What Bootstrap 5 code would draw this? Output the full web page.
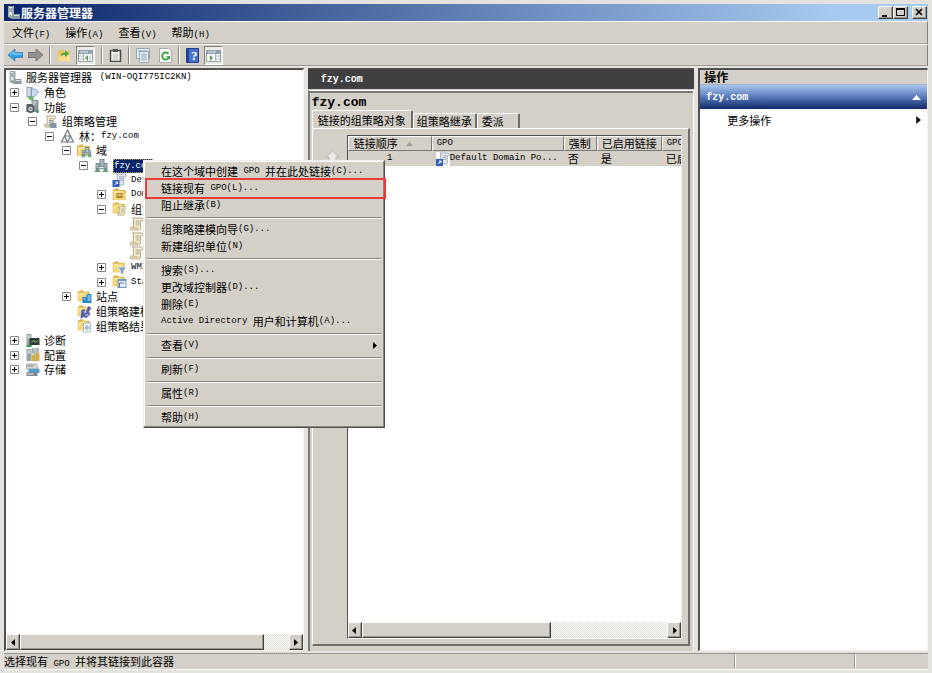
<!DOCTYPE html>
<html lang="zh-CN">
<head>
<meta charset="utf-8">
<meta name="viewport" content="width=device-width, initial-scale=1">
<title>服务器管理器</title>
<link href="https://cdn.jsdelivr.net/npm/bootstrap@5.3.0/dist/css/bootstrap.min.css" rel="stylesheet">
<style>
:root{--face:#d4d0c8;--shade:#808080;--deep:#505050;--navy:#0a246a}
body{font:11px/15px "Noto Sans CJK SC",sans-serif;color:#000;background:#e3e2de;min-height:100vh}
button{font:inherit;color:inherit;background:none;border:0;padding:0}
svg{display:block;flex:none}
ul{list-style:none;margin:0;padding:0}
.en{font-family:"Liberation Mono",monospace;font-size:9px;line-height:1}
.en-md{font-family:"Liberation Mono",monospace;font-size:10px}
.en-lg{font-family:"Liberation Mono",monospace;font-size:13px}
.window{min-height:100vh;padding:4px 4px 3px;background:#e3e2de}
.titlebar{height:17px;background:linear-gradient(90deg,var(--navy),#a6caf0 90%);color:#fff;font-size:12px;padding:0 1px 0 3px}
.raised{background:var(--face);border:1px solid;border-color:#fff #404040 #404040 #fff;box-shadow:inset -1px -1px 0 #9a968e}
.winbtn{width:15px;height:13px}
.menubar{height:23px;background:var(--face);border-top:1px solid #f8f7f4;border-right:1px solid var(--shade);border-bottom:1px solid #aaa69e;gap:15px;padding:0 8px}
.toolbar{height:22px;background:var(--face);border-top:1px solid #fff;border-right:1px solid var(--shade);border-bottom:1px solid #a09c94;padding:0 4px;gap:5px}
.tool-on{border:1px solid;border-color:var(--shade) #fff #fff var(--shade);background:#eceae5;height:19px;padding:1px}
.divide{width:2px;height:17px;margin:0 1px;border-left:1px solid #8c8880;border-right:1px solid #fff}
.panes{display:grid;grid-template-columns:minmax(0,300fr) minmax(0,387fr) minmax(0,230fr);gap:4px;padding-top:2px}
.sunken{border:1px solid;border-width:2px 1px 1px 2px;border-color:var(--deep) #f4f3f0 #f4f3f0 var(--deep);background:#fff}
.tree li{display:flex;align-items:center;height:15px;white-space:nowrap;padding-left:4px}
.tree li:nth-child(5n+3),.tree li:nth-child(5n+5){height:14px}
.tree .lv2{padding-left:22px}.tree .lv3{padding-left:39px}.tree .lv4{padding-left:56px}
.tree .lv5{padding-left:73px}.tree .lv6{padding-left:91px}.tree .lv7{padding-left:108px}
.twig{width:9px;height:9px;margin-right:6px;flex:none}
.tree li>svg.ico{margin-right:4px}
.tree .root{padding-left:2px}
.tree .root>svg.ico{margin-right:3px}
.picked{background:var(--navy);color:#fff;outline:1px dotted #b99a50;outline-offset:-1px;height:14px;line-height:14px;padding:0 1px}
.scroller{height:16px;background:repeating-conic-gradient(#fff 0 25%,#dfdcd6 0 50%) 0 0/2px 2px}
.arrowbtn{width:14px}
.thumb-a{flex:0 0 91%}.thumb-b{flex:0 0 62%}
.track{min-width:0}
.center-pane{background:var(--face);border-top:1px solid #505050}
.darkhead{height:20px;background:#404040;color:#fff;padding:0 13px;line-height:22px}
.inner{border:1px solid #fff;border-left:2px solid #777;border-bottom:0;box-shadow:inset 0 2px 0 #777;padding:4px 3px 5px 2px;margin-top:1px}
.domain{height:15px;line-height:16px}
.tabs{height:18px}
.tab{height:15px;line-height:14px;padding:0 3px;border-right:2px solid #706c66;border-top:1px solid #fff;border-left:1px solid #fff;border-radius:2px 2px 0 0;white-space:nowrap}
.tab.active{height:18px;padding:0 5px;line-height:16px}
.tab.wide-end{padding:0 14px 0 4px}
.sheet{border:1px solid #fff;border-right:2px solid #706c66;border-bottom:2px solid #706c66;padding:6px 6px 5px 13px;gap:8px}
.listbox{min-width:0;border:1px solid #505050;border-right-color:#eee;border-bottom-color:#fff;background:#fff}
.gpo{table-layout:fixed;width:380px;border-collapse:separate;border-spacing:0}
.gpo th{font-weight:400;height:15px;line-height:13px;padding:0 5px;background:var(--face);border:1px solid;border-color:#fff #777 #777 #fff;white-space:nowrap}
.gpo td{height:15px;line-height:15px;padding:0 4px;background:var(--face);white-space:nowrap}
.gpo th.tight,.gpo td.tight{padding:0 4px}
.gpo .en{vertical-align:top;line-height:inherit}
.actions-title{height:15px;line-height:14px;background:var(--face);padding-left:4px;font-size:12px;border-bottom:1px solid #9db4d0}
.actions-head{height:24px;background:linear-gradient(#a9c6ef,#5779b8 50%,#12296c);color:#fff;padding:1px 6px 0 6px}
.more{padding:0 6px 0 27px;height:22px}
.status{height:17px;line-height:15px;margin-top:2px;background:var(--face);border-top:1px solid #9a968e;border-bottom:1px solid #fff}
.status .cell{border-left:1px solid #9a968e;box-shadow:inset 1px 0 0 #fff}
.status .c1{flex:0 0 13%}.status .c2{flex:0 0 8%}
.popup{position:absolute;left:143px;top:160px;width:242px;z-index:5;background:var(--face);border:1px solid;border-color:#eee #505050 #505050 #eee;box-shadow:inset -1px -1px 0 #8a867e,inset 1px 1px 0 #fff;padding:2px 3px 1px}
.popup button{display:flex;align-items:center;width:100%;height:17px;padding:0 4px 0 14px;white-space:nowrap}
.popup hr{margin:3px 0 2px;height:2px;border:0;opacity:1;border-top:1px solid #8a867e;border-bottom:1px solid #fff}
.popup button.chosen{outline:2px solid #ea3c37;width:calc(100% + 3px)}
</style>
<script src="https://cdn.jsdelivr.net/npm/bootstrap@5.3.0/dist/js/bootstrap.bundle.min.js"></script>
</head>
<body>
<svg width="0" height="0" class="position-absolute" aria-hidden="true">
<defs>
<symbol id="plus" viewBox="0 0 9 9"><path d="M.5.5h8v8h-8z" fill="#fff" stroke="#888"/><path d="M2 4.500h5M4.500 2v5" stroke="#000"/></symbol>
<symbol id="minus" viewBox="0 0 9 9"><path d="M.5.5h8v8h-8z" fill="#fff" stroke="#888"/><path d="M2 4.500h5" stroke="#000"/></symbol>
<symbol id="server" viewBox="0 0 14 14"><path d="M1 0h6v12l-2 1-4-2z" fill="#9aa8ae"/><path d="M2 1h3v9H2z" fill="#dfe6e8"/><path d="M2 3h3M2 5h3" stroke="#63767e"/><path d="M6 8h7v5H6z" fill="#8799a2"/><path d="M7 9h5v1H7z" fill="#d7e0e4"/><path d="M3 9h1v1H3z" fill="#3aa340"/></symbol>
<symbol id="roles" viewBox="0 0 14 14"><path d="M1 1h6v11l-2 1-4-2z" fill="#92a5ad"/><path d="M2 2h3v8H2z" fill="#d5e0e5"/><path d="M6 3l4 0 3 3-3 4-4 1z" fill="#c7dcee" stroke="#6b8daf" stroke-width=".7"/><path d="M3 11h5v3H4z" fill="#58ba50"/></symbol>
<symbol id="features" viewBox="0 0 14 14"><path d="M6 0h7v12H6z" fill="#8a989d"/><path d="M7 2h4M7 4h4" stroke="#e0e7e9"/><path d="M1 4h6v8H1z" fill="#59636a"/><circle cx="5" cy="9" r="4" fill="#555c62"/><circle cx="5" cy="9" r="2.300" fill="#d7dcdc"/><circle cx="5" cy="9" r="1" fill="#596168"/><path d="M11 10h2v3h-2z" fill="#2e9a46"/></symbol>
<symbol id="scroll" viewBox="0 0 14 14"><path d="M3 1h9c2 0 2 3 0 3h-1v7c0 2-1 2-2 2H2c-2 0-2-3 0-3h2V3C4 2 4 1 3 1z" fill="#f5eed2" stroke="#a39674" stroke-width=".8"/><path d="M6 4h4M6 6h4M6 8h4" stroke="#9b957c" stroke-width=".8"/><path d="M2 11h7" stroke="#b6a66e"/></symbol>
<symbol id="bluescroll" viewBox="0 0 14 14"><path d="M3 1h9c2 0 2 3 0 3h-1v7c0 2-1 2-2 2H2c-2 0-2-3 0-3h2V3C4 2 4 1 3 1z" fill="#e6e8ee" stroke="#8890a5" stroke-width=".8"/><path d="M6 4h4M6 6h4M6 8h4" stroke="#8791ac" stroke-width=".8"/></symbol>
<symbol id="policy" viewBox="0 0 14 14"><use href="#scroll" width="13" height="13"/><path d="M6 5h3v7H6zM9 8h4v5H7z" fill="#8197a6"/><path d="M7 6h1v2H7z" fill="#fff"/></symbol>
<symbol id="forest" viewBox="0 0 14 14"><path d="M7 1l6 12H1zM4 7h6l-3 6z" fill="#f3f4f4" stroke="#777f83" stroke-width="1.200"/></symbol>
<symbol id="folder" viewBox="0 0 14 14"><path d="M0 2l5-2 2 2h6v10H0z" fill="#ddb54c"/><path d="M1 3h10v8H1z" fill="#fae79c"/><path d="M3 5h10l-1 7H1z" fill="#f3d676"/></symbol>
<symbol id="towers" viewBox="0 0 14 14"><path d="M5 0h5v8H5zM1 4h4v8H1zM9 4h4v8H9z" fill="#738c94"/><path d="M6 2h3M6 4h3M2 6h2M2 8h2M10 6h2M10 8h2M6 6h3" stroke="#d7e7e8"/><path d="M0 12h6v1H0zM8 12h6v1H8zM5 9h4v1H5z" fill="#58a972"/></symbol>
<symbol id="domains" viewBox="0 0 15 14"><use href="#folder" width="14" height="14"/><use href="#towers" x="4" y="3" width="11" height="11"/></symbol>
<symbol id="linkgpo" viewBox="0 0 14 14"><use href="#bluescroll" x="1" width="13" height="13"/><path d="M0 7h7v7H0z" fill="#3460bd"/><path d="M2 12l3-3M3 9h2v2" stroke="#fff" fill="none"/></symbol>
<symbol id="ou" viewBox="0 0 14 14"><use href="#folder" width="14" height="14"/><path d="M4 5h6v5H4z" fill="#ab872b"/><path d="M5 7h4" stroke="#fff5c0"/></symbol>
<symbol id="gpos" viewBox="0 0 14 14"><use href="#folder" width="13" height="13"/><use href="#scroll" x="4" y="4" width="10" height="10"/></symbol>
<symbol id="filter" viewBox="0 0 14 14"><use href="#folder" width="13" height="13"/><path d="M5 6h9l-3 4v3H8v-3z" fill="#7fa6cf" stroke="#fff" stroke-width=".6"/></symbol>
<symbol id="starter" viewBox="0 0 14 14"><use href="#folder" width="13" height="13"/><path d="M5 4h9v9H5z" fill="#6e95bf"/><path d="M6 6h7v6H6z" fill="#e4edf5"/><path d="M7 12V8h4" fill="none" stroke="#5178a7"/></symbol>
<symbol id="sites" viewBox="0 0 14 14"><use href="#folder" width="13" height="13"/><path d="M5 7h4v6H5zM9 4h5v9H9z" fill="#2787cd"/><path d="M6 9h2M10 6h3M10 8h3M10 10h3" stroke="#c0e3ff"/></symbol>
<symbol id="model" viewBox="0 0 14 14"><use href="#folder" width="13" height="13"/><path d="M4 5l3-1 1 3 3-6 3 2-3 4 2 2-4 4-3-1-3 2z" fill="#5560ad"/><path d="M6 7h3M8 10h3" stroke="#e7e9ff"/></symbol>
<symbol id="result" viewBox="0 0 14 14"><use href="#folder" width="13" height="13"/><path d="M6 4h7v9H6z" fill="#edf4fa" stroke="#91a5b5" stroke-width=".7"/><path d="M11 7c-4 0-4 3-1 4M9 9h3" stroke="#4b88ad" fill="none"/></symbol>
<symbol id="diag" viewBox="0 0 14 14"><path d="M1 0h5v12H1z" fill="#94a3a7"/><path d="M2 2h3M2 4h3" stroke="#eef2f2"/><path d="M4 4h10v7H4z" fill="#2d3936"/><path d="M5 8h2l1-2 2 3 1-2h2" stroke="#71c456" fill="none" stroke-width=".8"/><path d="M1 11h5v2H1z" fill="#3b9b55"/></symbol>
<symbol id="config" viewBox="0 0 14 14"><path d="M1 1h5v12H1z" fill="#94a3a7"/><path d="M2 3h3M2 5h3" stroke="#eef2f2"/><path d="M7 0v5l2 2v6h2V6l2-2V0" fill="#b6c0c4" stroke="#7b8588" stroke-width=".6"/><path d="M6 7h3v6H6zM11 5h3v8h-3z" fill="#e3ad26"/></symbol>
<symbol id="storage" viewBox="0 0 14 14"><path d="M1 1h10l2 5H1z" fill="#d6d9d9" stroke="#818c91" stroke-width=".6"/><path d="M2 3h6" stroke="#777"/><path d="M3 6h11v4H3z" fill="#4a9ed2"/><path d="M1 9h11v4H1z" fill="#7b8a91"/><path d="M2 11h6" stroke="#eef"/></symbol>
<symbol id="left" viewBox="0 0 5 7"><path d="M4 0v7L0 3.500z"/></symbol>
<symbol id="right" viewBox="0 0 5 7"><path d="M1 0v7l4-3.500z"/></symbol>
</defs>
</svg>
<div class="window d-flex flex-column">
<header class="titlebar d-flex align-items-center fw-bold">
<svg width="14" height="14"><use href="#server"/></svg><span>服务器管理器</span>
<span class="ms-auto d-flex">
<button class="raised winbtn" aria-label="最小化"><svg width="12" height="11"><path d="M3 8h5v2H3z"/></svg></button>
<button class="raised winbtn" aria-label="最大化"><svg width="12" height="11"><path d="M2.500 2.500h8v6h-8z" fill="none" stroke="#000"/><path d="M2 1h9v2H2z"/></svg></button>
<button class="raised winbtn ms-1" aria-label="关闭"><svg width="12" height="11"><path d="M3 2l6 6M9 2L3 8" stroke="#000" stroke-width="1.600"/></svg></button>
</span>
</header>
<nav class="menubar d-flex align-items-center">
<button>文件<span class="en">(F)</span></button><button>操作<span class="en">(A)</span></button><button>查看<span class="en">(V)</span></button><button>帮助<span class="en">(H)</span></button>
</nav>
<div class="toolbar d-flex align-items-center" role="toolbar" aria-label="工具栏">
<button aria-label="后退"><svg width="15" height="14"><path d="M0 7l7-6v3.500h8v5H7V13z" fill="#35a0e4" stroke="#327cb8" stroke-width=".8"/><path d="M2 7l4-3v2h8" stroke="#9cddff" fill="none"/></svg></button>
<button aria-label="前进"><svg width="15" height="14"><path d="M15 7L8 1v3.500H0v5h8V13z" fill="#929292" stroke="#686868" stroke-width=".8"/></svg></button>
<span class="divide"></span>
<button aria-label="向上一级"><svg width="14" height="14"><path d="M1 3l5-2 1 2h6v10H1z" fill="#eac45e"/><path d="M2 7h11v6H1z" fill="#f9dc83"/><path d="M3 9c1-4 3-4 5-4V2l4 4-4 3V7c-2 0-3 0-5 2z" fill="#45a844"/></svg></button>
<button class="tool-on" aria-label="显示控制台树"><svg width="15" height="15"><path d="M.5 2.500h14v11H.5z" fill="#fff" stroke="#99a1a5"/><path d="M1 3h13v3H1z" fill="#8ba0b4"/><path d="M2 4h8" stroke="#eaf1f4"/><path d="M5.500 6v8M1 8h4M1 11h4M12 7v6" stroke="#a8b5bc"/><path d="M10 7v6L7 10z" fill="#48a83d"/></svg></button>
<span class="divide"></span>
<button aria-label="属性"><svg width="13" height="14"><path d="M1.500 2.500h10v11h-10z" fill="#eee" stroke="#4c4c4c" stroke-width="1.500"/><path d="M4 1h5v3H4z" fill="#555"/><path d="M4 7h5M4 9h5M4 11h5" stroke="#bbb"/></svg></button>
<span class="divide"></span>
<button aria-label="列表"><svg width="14" height="15"><path d="M.5.500h13v10H.5z" fill="#edf4f7" stroke="#8ea4ae"/><path d="M3.500 3.500h9v11h-9z" fill="#fff" stroke="#8ea4ae"/><path d="M2 3h10M5 6h6M5 8h6M5 10h6M5 12h6" stroke="#719ab2"/></svg></button>
<button class="ms-1" aria-label="刷新"><svg width="13" height="15"><path d="M.5.500h9l3 3v11H.5z" fill="#fff" stroke="#aaa"/><path d="M9.500 6A3.500 3.500 0 1 0 10 9" fill="none" stroke="#3da84a" stroke-width="2"/><path d="M7 8h4v4z" fill="#3da84a"/></svg></button>
<span class="divide"></span>
<button aria-label="帮助"><svg width="13" height="15" font-family="Liberation Serif,serif"><path d="M.5.500h12v14H.5z" fill="#4470ce" stroke="#213d8d"/><path d="M1 1h2v13H1z" fill="#243f96"/><text x="5" y="12" font-size="13" font-weight="700" fill="#fff">?</text></svg></button>
<button class="tool-on" aria-label="显示操作窗格"><svg width="15" height="15"><path d="M.5 2.500h14v11H.5z" fill="#fff" stroke="#99a1a5"/><path d="M1 3h13v3H1z" fill="#8ba0b4"/><path d="M2 4h8" stroke="#eaf1f4"/><path d="M9.500 6v8M10 8h4M10 11h4" stroke="#a8b5bc"/><path d="M4 7v6l3-3z" fill="#48a83d"/></svg></button>
</div>
<main class="panes flex-grow-1">
<section class="sunken d-flex flex-column overflow-hidden">
<ul class="tree flex-grow-1" aria-label="控制台树">
<li class="root"><svg class="ico" width="15" height="14"><use href="#server"/></svg>服务器管理器&nbsp;<span class="en">&nbsp;(WIN-OQI775IC2KN)</span></li>
<li><svg class="twig"><use href="#plus"/></svg><svg class="ico" width="15" height="14"><use href="#roles"/></svg>角色</li>
<li><svg class="twig"><use href="#minus"/></svg><svg class="ico" width="15" height="14"><use href="#features"/></svg>功能</li>
<li class="lv2"><svg class="twig"><use href="#minus"/></svg><svg class="ico" width="15" height="14"><use href="#policy"/></svg>组策略管理</li>
<li class="lv3"><svg class="twig"><use href="#minus"/></svg><svg class="ico" width="15" height="14"><use href="#forest"/></svg>林：<span class="en">fzy.com</span></li>
<li class="lv4"><svg class="twig"><use href="#minus"/></svg><svg class="ico" width="15" height="14"><use href="#domains"/></svg>域</li>
<li class="lv5"><svg class="twig"><use href="#minus"/></svg><svg class="ico" width="15" height="14"><use href="#towers"/></svg><span class="picked en">fzy.com</span></li>
<li class="lv6"><span class="twig"></span><svg class="ico" width="15" height="14"><use href="#linkgpo"/></svg><span class="en">Default Domain Policy</span></li>
<li class="lv6"><svg class="twig"><use href="#plus"/></svg><svg class="ico" width="15" height="14"><use href="#ou"/></svg><span class="en">Domain Controllers</span></li>
<li class="lv6"><svg class="twig"><use href="#minus"/></svg><svg class="ico" width="15" height="14"><use href="#gpos"/></svg>组策略对象</li>
<li class="lv7"><span class="twig"></span><svg class="ico" width="15" height="14"><use href="#scroll"/></svg></li>
<li class="lv7"><span class="twig"></span><svg class="ico" width="15" height="14"><use href="#scroll"/></svg></li>
<li class="lv7"><span class="twig"></span><svg class="ico" width="15" height="14"><use href="#scroll"/></svg></li>
<li class="lv6"><svg class="twig"><use href="#plus"/></svg><svg class="ico" width="15" height="14"><use href="#filter"/></svg><span class="en">WMI</span></li>
<li class="lv6"><svg class="twig"><use href="#plus"/></svg><svg class="ico" width="15" height="14"><use href="#starter"/></svg><span class="en">Starter GPO</span></li>
<li class="lv4"><svg class="twig"><use href="#plus"/></svg><svg class="ico" width="15" height="14"><use href="#sites"/></svg>站点</li>
<li class="lv4"><span class="twig"></span><svg class="ico" width="15" height="14"><use href="#model"/></svg>组策略建模</li>
<li class="lv4"><span class="twig"></span><svg class="ico" width="15" height="14"><use href="#result"/></svg>组策略结果</li>
<li><svg class="twig"><use href="#plus"/></svg><svg class="ico" width="15" height="14"><use href="#diag"/></svg>诊断</li>
<li><svg class="twig"><use href="#plus"/></svg><svg class="ico" width="15" height="14"><use href="#config"/></svg>配置</li>
<li><svg class="twig"><use href="#plus"/></svg><svg class="ico" width="15" height="14"><use href="#storage"/></svg>存储</li>
</ul>
<div class="scroller d-flex">
<button class="raised arrowbtn d-flex align-items-center justify-content-center" aria-label="向左滚动"><svg width="5" height="7"><use href="#left"/></svg></button>
<div class="track d-flex flex-grow-1"><div class="raised thumb-a"></div></div>
<button class="raised arrowbtn d-flex align-items-center justify-content-center" aria-label="向右滚动"><svg width="5" height="7"><use href="#right"/></svg></button>
</div>
</section>
<section class="center-pane d-flex flex-column overflow-hidden">
<div class="darkhead fw-bold en-md">fzy.com</div>
<div class="inner d-flex flex-column flex-grow-1">
<div class="domain fw-bold en-lg">fzy.com</div>
<div class="tabs d-flex align-items-end" role="tablist">
<button class="tab active" role="tab" aria-selected="true">链接的组策略对象</button><button class="tab" role="tab">组策略继承</button><button class="tab wide-end" role="tab">委派</button>
</div>
<div class="sheet d-flex flex-grow-1">
<div class="pt-3"><button aria-label="上移"><svg width="13" height="12"><path d="M6.500 0L13 6h-3v6H3V6H0z" fill="#eceae6" stroke="#b9b6af"/></svg></button></div>
<div class="listbox d-flex flex-column flex-grow-1 overflow-hidden">
<div class="flex-grow-1 overflow-hidden">
<table class="gpo">
<colgroup><col width="84"><col width="132"><col width="33"><col width="65"><col width="66"></colgroup>
<thead><tr><th><span class="d-flex align-items-center">链接顺序<svg width="7" height="4" class="ms-2"><path d="M0 4l3.500-4L7 4z" fill="#999"/></svg></span></th><th class="tight"><span class="en">GPO</span></th><th class="tight">强制</th><th class="tight">已启用链接</th><th class="tight"><span class="en">GPO&nbsp;</span>状态</th></tr></thead>
<tbody><tr><td class="text-center"><span class="en">1</span></td><td class="tight"><span class="d-flex align-items-center"><svg width="14" height="14" class="bg-white"><use href="#linkgpo"/></svg><span class="en">Default Domain Po...</span></span></td><td class="tight">否</td><td class="tight">是</td><td class="tight">已启用</td></tr></tbody>
</table>
</div>
<div class="scroller d-flex">
<button class="raised arrowbtn d-flex align-items-center justify-content-center" aria-label="向左滚动"><svg width="5" height="7"><use href="#left"/></svg></button>
<div class="track d-flex flex-grow-1"><div class="raised thumb-b"></div></div>
<button class="raised arrowbtn d-flex align-items-center justify-content-center" aria-label="向右滚动"><svg width="5" height="7"><use href="#right"/></svg></button>
</div>
</div>
</div>
</div>
</section>
<aside class="sunken">
<div class="actions-title fw-bold">操作</div>
<button class="actions-head d-flex w-100 align-items-center justify-content-between"><span class="en-md fw-bold">fzy.com</span><svg width="9" height="5"><path d="M0 5l4.500-5L9 5z" fill="#fff"/></svg></button>
<button class="more d-flex w-100 align-items-center justify-content-between"><span>更多操作</span><svg width="6" height="8"><use href="#right"/></svg></button>
</aside>
</main>
<footer class="status d-flex"><div class="flex-grow-1">选择现有<span class="en">&nbsp;GPO&nbsp;</span>并将其链接到此容器</div><div class="cell c1"></div><div class="cell c2"></div></footer>
</div>
<div class="popup" role="menu">
<button role="menuitem">在这个域中创建<span class="en">&nbsp;GPO&nbsp;</span>并在此处链接<span class="en">(C)...</span></button>
<button role="menuitem" class="chosen">链接现有<span class="en">&nbsp;GPO(L)...</span></button>
<button role="menuitem">阻止继承<span class="en">(B)</span></button>
<hr>
<button role="menuitem">组策略建模向导<span class="en">(G)...</span></button>
<button role="menuitem">新建组织单位<span class="en">(N)</span></button>
<hr>
<button role="menuitem">搜索<span class="en">(S)...</span></button>
<button role="menuitem">更改域控制器<span class="en">(D)...</span></button>
<button role="menuitem">删除<span class="en">(E)</span></button>
<button role="menuitem"><span class="en">Active Directory&nbsp;</span>用户和计算机<span class="en">(A)...</span></button>
<hr>
<button role="menuitem">查看<span class="en">(V)</span><svg class="ms-auto" width="5" height="7"><use href="#right"/></svg></button>
<hr>
<button role="menuitem">刷新<span class="en">(F)</span></button>
<hr>
<button role="menuitem">属性<span class="en">(R)</span></button>
<hr>
<button role="menuitem">帮助<span class="en">(H)</span></button>
</div>
</body>
</html>
